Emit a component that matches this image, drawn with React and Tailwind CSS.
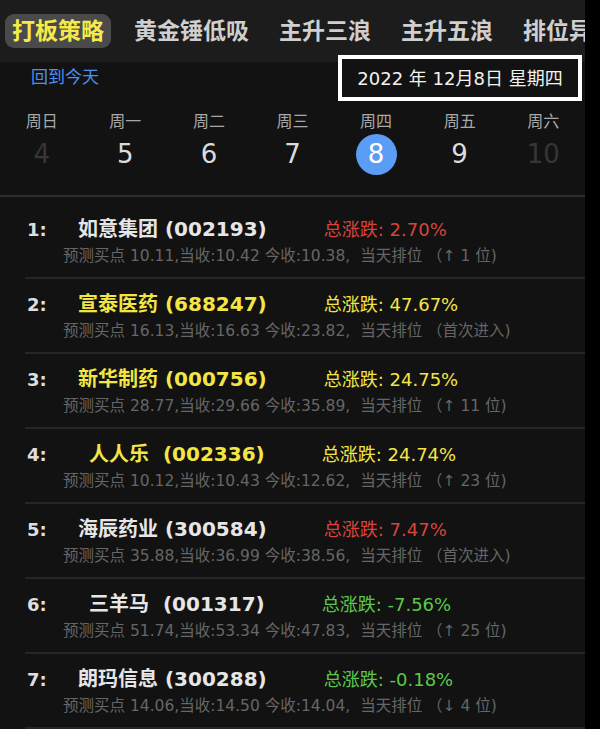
import React from "react";

const tabs = ["打板策略", "黄金锤低吸", "主升三浪", "主升五浪", "排位异动"];

const days = [
  { label: "周日", num: "4", dim: true },
  { label: "周一", num: "5" },
  { label: "周二", num: "6" },
  { label: "周三", num: "7" },
  { label: "周四", num: "8", active: true },
  { label: "周五", num: "9" },
  { label: "周六", num: "10", dim: true },
];

const stocks = [
  { name: "如意集团", code: "002193", change: "2.70%", tone: "red", buy: "10.11", prev: "10.42", now: "10.38", rank: "（↑ 1 位)" },
  { name: "宣泰医药", code: "688247", change: "47.67%", tone: "yellow", buy: "16.13", prev: "16.63", now: "23.82", rank: "（首次进入)", hot: true },
  { name: "新华制药", code: "000756", change: "24.75%", tone: "yellow", buy: "28.77", prev: "29.66", now: "35.89", rank: "（↑ 11 位)", hot: true },
  { name: "人人乐", code: "002336", change: "24.74%", tone: "yellow", buy: "10.12", prev: "10.43", now: "12.62", rank: "（↑ 23 位)", hot: true, short: true },
  { name: "海辰药业", code: "300584", change: "7.47%", tone: "red", buy: "35.88", prev: "36.99", now: "38.56", rank: "（首次进入)" },
  { name: "三羊马", code: "001317", change: "-7.56%", tone: "green", buy: "51.74", prev: "53.34", now: "47.83", rank: "（↑ 25 位)", short: true },
  { name: "朗玛信息", code: "300288", change: "-0.18%", tone: "green", buy: "14.06", prev: "14.50", now: "14.04", rank: "（↓ 4 位)" },
];

const toneClass = {
  red: "text-[#d8443b]",
  yellow: "text-[#f2e545]",
  green: "text-[#5cc84b]",
};

const StockRow = ({ index, stock }) => (
  <div className="border-b-2 border-[#262626] pt-[12px] pb-[11px]">
    <div className="flex items-center h-[26px] pl-[2px]">
      <span className="text-[18px] font-bold text-[#dedede] w-[18px]">{index}:</span>
      <span
        className={`text-[20px] font-semibold whitespace-pre ${stock.short ? "ml-[44px]" : "ml-[33px]"} ${
          stock.hot ? "text-[#f2e545]" : "text-[#e6e6e6]"
        }`}
      >
        {stock.short ? `${stock.name}  (${stock.code})` : `${stock.name} (${stock.code})`}
      </span>
      <span className={`ml-[57px] text-[18px] ${toneClass[stock.tone]}`}>总涨跌: {stock.change}</span>
    </div>
    <div className="pl-[38px] mt-[4px] h-[20px] leading-[20px] text-[15.5px] text-[#666666] whitespace-pre">
      {`预测买点 ${stock.buy},当收:${stock.prev} 今收:${stock.now},  当天排位 ${stock.rank}`}
    </div>
  </div>
);

const App = () => {
  return (
    <div className="w-[600px] h-[729px] bg-black flex overflow-hidden font-['DejaVu_Sans','Noto_Sans_CJK_SC',sans-serif]">
      <div className="w-[585px] h-full bg-[#121212] flex flex-col overflow-hidden">
        <div className="h-[62px] shrink-0 bg-[#1c1c1c] flex items-center pl-[5px] gap-[16px] overflow-hidden whitespace-nowrap">
          {tabs.map((t, i) => (
            <div
              key={t}
              className={`shrink-0 px-[7px] h-[34px] flex items-center rounded-[9px] text-[23px] font-bold ${
                i === 0 ? "bg-[#4a4a4a] text-[#f6ea4b]" : "text-[#cfcfcf]"
              }`}
            >
              {t}
            </div>
          ))}
        </div>

        <div className="h-[32px] shrink-0 flex items-center justify-between pl-[31px] pr-[3px]">
          <span className="text-[17px] text-[#4b8ff0]">回到今天</span>
          <div className="-my-[7px] h-[46px] w-[244px] border-[4px] border-white bg-[#121212] flex items-center justify-center text-[18px] text-[#f2f2f2]">
            2022 年 12月8日 星期四
          </div>
        </div>

        <div className="grid grid-cols-7 pt-[18px] h-[103px] shrink-0 border-b-2 border-[#2c2c2c]">
          {days.map((d) => (
            <div key={d.label} className="flex flex-col items-center">
              <span className="text-[16px] leading-[20px] text-[#a8a8a8]">{d.label}</span>
              <div
                className={`mt-[2px] w-[41px] h-[41px] rounded-full flex items-center justify-center text-[26px] ${
                  d.active ? "bg-[#5b9cf6] text-white" : d.dim ? "text-[#363636]" : "text-[#dcdcdc]"
                }`}
              >
                {d.num}
              </div>
            </div>
          ))}
        </div>

        <div className="ml-[25px] pt-[7px]">
          {stocks.map((s, i) => (
            <StockRow key={s.code} index={i + 1} stock={s} />
          ))}
        </div>
      </div>
    </div>
  );
};

export default App;
